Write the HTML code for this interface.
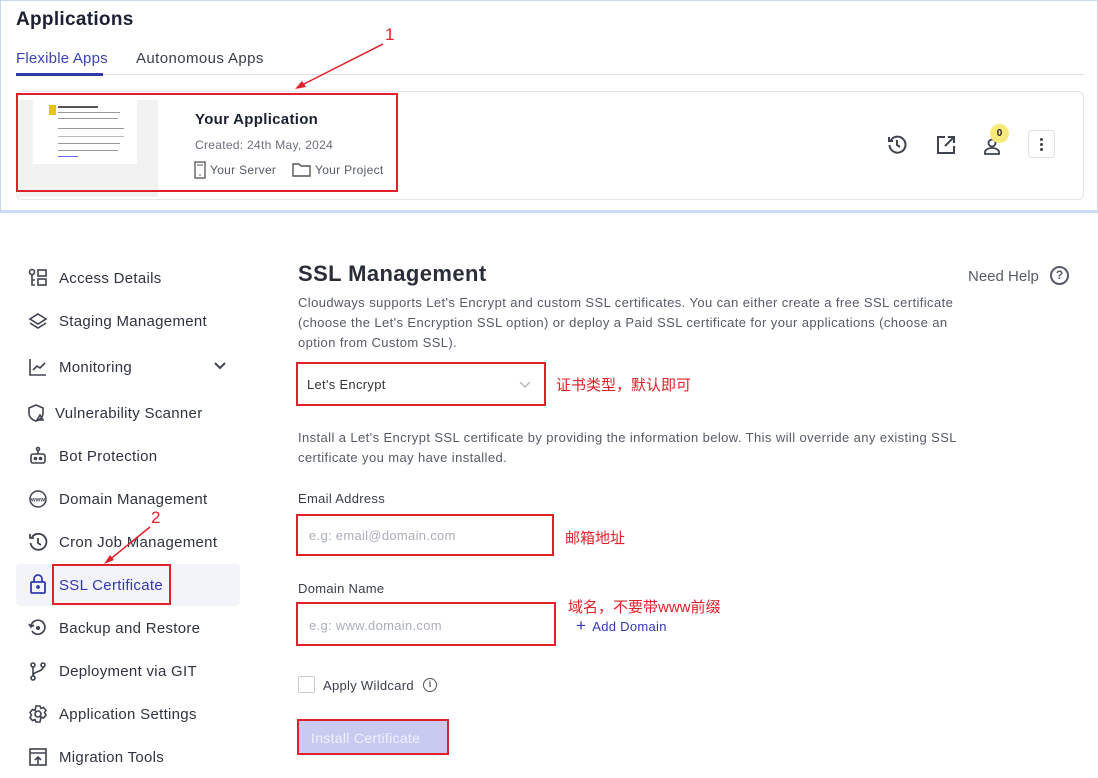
<!DOCTYPE html>
<html><head><meta charset="utf-8"><style>
*{margin:0;padding:0;box-sizing:border-box}
body{width:1098px;height:778px;position:relative;background:#fff;font-family:"Liberation Sans","Noto Sans CJK SC",sans-serif;color:#2b2f3b;overflow:hidden}
.a{position:absolute;white-space:nowrap}
.red{border:2px solid #e0202a}
.cn{color:#e0202a;font-size:15px;font-family:"Liberation Sans","Noto Sans CJK SC",sans-serif}
.nav{position:absolute;left:59px;font-size:15px;color:#2f3340;line-height:18px;letter-spacing:0.3px}
.ic{position:absolute;left:28px}
svg{display:block}
.p{font-size:13px;color:#555a66;line-height:20px;letter-spacing:0.4px}
</style></head><body>
<div class="a" style="left:0;top:0;width:1098px;height:213px;border:1px solid #c8d8ee;border-bottom:3px solid #c7dcf3;background:#fff"></div>
<div class="a" style="left:16px;top:9px;font-size:19px;font-weight:bold;color:#1b2033;letter-spacing:0.3px">Applications</div>
<div class="a" style="left:16px;top:50px;font-size:15px;color:#3a44b8;letter-spacing:0.2px">Flexible Apps</div>
<div class="a" style="left:136px;top:50px;font-size:15px;color:#3a3e4a;letter-spacing:0.4px">Autonomous Apps</div>
<div class="a" style="left:16px;top:74px;width:1068px;height:1px;background:#dcdfe5"></div>
<div class="a" style="left:16px;top:73px;width:87px;height:3px;background:#2d3aa8"></div>
<div class="a" style="left:16px;top:91px;width:1068px;height:109px;border:1px solid #e3e5ea;border-radius:6px;background:#fff"></div>
<div class="a" style="left:18px;top:100px;width:140px;height:97px;background:#f2f2f2"></div>
<div class="a" style="left:33px;top:100px;width:104px;height:64px;background:#fff"></div>
<div class="a" style="left:49px;top:105px;width:7px;height:10px;background:#e7c21a"></div>
<div class="a" style="left:58px;top:106px;width:40px;height:2px;background:#555"></div>
<div class="a" style="left:58px;top:112px;width:62px;height:1px;background:#999"></div>
<div class="a" style="left:58px;top:118px;width:60px;height:1px;background:#999"></div>
<div class="a" style="left:58px;top:128px;width:66px;height:1px;background:#999"></div>
<div class="a" style="left:58px;top:136px;width:66px;height:1px;background:#bbb"></div>
<div class="a" style="left:58px;top:143px;width:62px;height:1px;background:#999"></div>
<div class="a" style="left:58px;top:150px;width:60px;height:1px;background:#999"></div>
<div class="a" style="left:58px;top:156px;width:20px;height:1px;background:#66f"></div>
<div class="a red" style="left:16px;top:93px;width:382px;height:99px"></div>
<div class="a" style="left:195px;top:111px;font-size:15px;font-weight:bold;color:#1b2033;letter-spacing:0.3px">Your Application</div>
<div class="a" style="left:195px;top:138px;font-size:12px;color:#6b6f7a;letter-spacing:0.3px">Created: 24th May, 2024</div>
<svg class="a" style="left:194px;top:161px" width="12" height="18"><rect x="1" y="1" width="10" height="16" fill="none" stroke="#555" stroke-width="1.3"/><line x1="3" y1="4" x2="9" y2="4" stroke="#555"/><circle cx="6" cy="14" r=".8" fill="#555"/></svg>
<div class="a" style="left:210px;top:163px;font-size:12px;color:#555a66;letter-spacing:0.3px">Your Server</div>
<svg class="a" style="left:292px;top:162px" width="19" height="15"><path d="M1 2h6l2 2h9v10H1z" fill="none" stroke="#555" stroke-width="1.4"/></svg>
<div class="a" style="left:315px;top:163px;font-size:12px;color:#555a66;letter-spacing:0.3px">Your Project</div>
<svg class="a" style="left:887px;top:134px" width="20" height="20" fill="none" stroke="#3f4350" stroke-width="2"><path d="M4 6A8 8 0 1 1 2.5 11"/><path d="M2 3v4h4"/><path d="M10 6v5l3 2"/></svg>
<svg class="a" style="left:936px;top:135px" width="20" height="20" fill="none" stroke="#3f4350" stroke-width="2"><path d="M9 2H2v16h16v-7"/><path d="M12 2h6v6M18 2l-9 9"/></svg>
<svg class="a" style="left:983px;top:136px" width="18" height="20" fill="none" stroke="#3f4350" stroke-width="1.8"><circle cx="9" cy="7" r="3.5"/><path d="M2 18v-2c0-2 3-4 7-4s7 2 7 4v2z"/></svg>
<div class="a" style="left:990px;top:124px;width:19px;height:19px;border-radius:50%;background:#f8ea7a;font-size:10px;font-weight:bold;text-align:center;line-height:19px;color:#222">0</div>
<div class="a" style="left:1028px;top:130px;width:27px;height:28px;border:1px solid #dde0e6;border-radius:4px"></div>
<div class="a" style="left:1040px;top:138px;width:3px;height:3px;border-radius:50%;background:#3f4350;box-shadow:0 5px 0 #3f4350,0 10px 0 #3f4350"></div>
<div class="a" style="left:385px;top:25px;font-size:17px;color:#e0202a">1</div>
<svg class="a" style="left:290px;top:40px" width="100" height="55"><line x1="93" y1="4" x2="8" y2="47" stroke="#e0202a" stroke-width="1.5"/><path d="M5 49l11-2-4-6z" fill="#e0202a"/></svg>

<div class="a" style="left:16px;top:564px;width:224px;height:42px;background:#f3f4fa;border-radius:4px"></div>
<svg class="ic" style="top:268px" width="20" height="20" fill="none" stroke="#3f4350" stroke-width="1.6"><circle cx="4" cy="4" r="2.5"/><path d="M4 7v10h3M4 12h3"/><rect x="10" y="2" width="8" height="6"/><rect x="10" y="11" width="8" height="6"/></svg>
<div class="nav" style="top:270px">Access Details</div>
<svg class="ic" style="top:312px" width="20" height="20" fill="none" stroke="#3f4350" stroke-width="1.6"><path d="M10 2l8 5-8 5-8-5z"/><path d="M2 11l8 5 8-5"/></svg>
<div class="nav" style="top:313px">Staging Management</div>
<svg class="ic" style="top:357px" width="20" height="20" fill="none" stroke="#3f4350" stroke-width="1.6"><path d="M2 2v16h16"/><path d="M5 13l4-4 3 2 5-5"/></svg>
<div class="nav" style="top:359px">Monitoring</div>
<svg class="a" style="left:214px;top:362px" width="12" height="8" fill="none" stroke="#3f4350" stroke-width="2"><path d="M1 1l5 5 5-5"/></svg>
<svg class="ic" style="top:403px;left:26px" width="20" height="20" fill="none" stroke="#3f4350" stroke-width="1.6"><path d="M10 2l7 3v5c0 4-3 7-7 8-4-1-7-4-7-8V5z"/><path d="M11 17l3-5 3 5z"/></svg>
<div class="nav" style="top:405px;left:55px">Vulnerability Scanner</div>
<svg class="ic" style="top:446px" width="20" height="20" fill="none" stroke="#3f4350" stroke-width="1.6"><circle cx="10" cy="3" r="1.5"/><path d="M10 5v3"/><rect x="3" y="8" width="14" height="9" rx="2"/><circle cx="7.5" cy="12.5" r="1" fill="#3f4350"/><circle cx="12.5" cy="12.5" r="1" fill="#3f4350"/></svg>
<div class="nav" style="top:448px">Bot Protection</div>
<svg class="ic" style="top:489px" width="20" height="20" fill="none" stroke="#3f4350" stroke-width="1.5"><circle cx="10" cy="10" r="8"/><text x="10" y="12.5" font-size="6" text-anchor="middle" fill="#3f4350" stroke="none" font-weight="bold" font-family="Liberation Sans">www</text></svg>
<div class="nav" style="top:491px">Domain Management</div>
<svg class="ic" style="top:532px" width="20" height="20" fill="none" stroke="#3f4350" stroke-width="1.8"><path d="M4 5A8 8 0 1 1 2.5 11"/><path d="M2 2v4h4"/><path d="M10 6v5l3 2"/></svg>
<div class="nav" style="top:534px">Cron Job Management</div>
<svg class="ic" style="top:574px" width="20" height="20" fill="none" stroke="#3338b0" stroke-width="1.8"><rect x="3" y="8" width="14" height="11" rx="1"/><path d="M6 8V5a4 4 0 0 1 8 0v3"/><circle cx="10" cy="13" r="1" fill="#3338b0"/></svg>
<div class="nav" style="top:577px;color:#3338b0">SSL Certificate</div>
<div class="a red" style="left:52px;top:564px;width:119px;height:41px"></div>
<div class="a" style="left:151px;top:508px;font-size:17px;color:#e0202a">2</div>
<svg class="a" style="left:100px;top:524px" width="55" height="45"><line x1="50" y1="3" x2="8" y2="37" stroke="#e0202a" stroke-width="1.5"/><path d="M4 40l10-4-4-5z" fill="#e0202a"/></svg>
<svg class="ic" style="top:618px" width="20" height="20" fill="none" stroke="#3f4350" stroke-width="1.7"><path d="M4 13A7 7 0 1 0 3 8"/><path d="M1 6l2 3 3-2"/><circle cx="10" cy="10" r="1.2" fill="#3f4350"/></svg>
<div class="nav" style="top:620px">Backup and Restore</div>
<svg class="ic" style="top:661px" width="20" height="20" fill="none" stroke="#3f4350" stroke-width="1.6"><circle cx="5" cy="4" r="2"/><circle cx="5" cy="17" r="2"/><circle cx="15" cy="4" r="2"/><path d="M5 6v9M15 6c0 5-10 4-10 9"/></svg>
<div class="nav" style="top:663px">Deployment via GIT</div>
<svg class="ic" style="top:704px" width="20" height="20" fill="none" stroke="#3f4350" stroke-width="1.6"><circle cx="10" cy="10" r="3"/><path d="M8 2h4l1 2.5 2.5-1 2.5 3-1.5 2 1.5 2.5-2.5 3-2.5-1L12 18H8l-1-2.5-2.5 1-2.5-3L3.5 11 2 8.5l2.5-3 2.5 1z"/></svg>
<div class="nav" style="top:706px">Application Settings</div>
<svg class="ic" style="top:747px" width="20" height="20" fill="none" stroke="#3f4350" stroke-width="1.6"><rect x="2" y="2" width="16" height="16"/><path d="M2 6h16M10 17v-7M7 13l3-3 3 3"/></svg>
<div class="nav" style="top:749px">Migration Tools</div>

<div class="a" style="left:298px;top:261px;font-size:22px;font-weight:bold;color:#2a2e3a;letter-spacing:0.4px">SSL Management</div>
<div class="a" style="left:968px;top:268px;font-size:15px;color:#555a66">Need Help</div>
<div class="a" style="left:1050px;top:266px;width:19px;height:19px;border:2px solid #555a66;border-radius:50%;font-size:12px;font-weight:bold;text-align:center;line-height:15px;color:#555a66">?</div>
<div class="a p" style="left:298px;top:293px">Cloudways supports Let's Encrypt and custom SSL certificates. You can either create a free SSL certificate<br>(choose the Let's Encryption SSL option) or deploy a Paid SSL certificate for your applications (choose an<br>option from Custom SSL).</div>
<div class="a red" style="left:296px;top:362px;width:250px;height:44px"></div>
<div class="a" style="left:307px;top:377px;font-size:13px;color:#333;letter-spacing:0.3px">Let's Encrypt</div>
<svg class="a" style="left:519px;top:381px" width="12" height="7" fill="none" stroke="#bbb" stroke-width="1.5"><path d="M1 1l5 5 5-5"/></svg>
<div class="a cn" style="left:556px;top:374px">证书类型，默认即可</div>
<div class="a p" style="left:298px;top:428px">Install a Let's Encrypt SSL certificate by providing the information below. This will override any existing SSL<br>certificate you may have installed.</div>
<div class="a" style="left:298px;top:491px;font-size:13px;color:#3a3e4a;letter-spacing:0.3px">Email Address</div>
<div class="a red" style="left:296px;top:514px;width:258px;height:42px"></div>
<div class="a" style="left:309px;top:528px;font-size:13px;color:#aaaeb8;letter-spacing:0.3px">e.g: email@domain.com</div>
<div class="a cn" style="left:565px;top:527px">邮箱地址</div>
<div class="a" style="left:298px;top:581px;font-size:13px;color:#3a3e4a;letter-spacing:0.3px">Domain Name</div>
<div class="a red" style="left:296px;top:602px;width:260px;height:44px"></div>
<div class="a" style="left:309px;top:618px;font-size:13px;color:#aaaeb8;letter-spacing:0.3px">e.g: www.domain.com</div>
<div class="a cn" style="left:568px;top:596px">域名，不要带www前缀</div>
<div class="a" style="left:576px;top:616px;font-size:13px;color:#3338b0;letter-spacing:0.3px"><span style="font-size:17px;margin-right:6px">+</span>Add Domain</div>
<div class="a" style="left:298px;top:676px;width:17px;height:17px;border:1px solid #c9ccd3;border-radius:2px"></div>
<div class="a" style="left:323px;top:678px;font-size:13px;color:#3a3e4a;letter-spacing:0.3px">Apply Wildcard</div>
<div class="a" style="left:423px;top:678px;width:14px;height:14px;border:1.5px solid #555;border-radius:50%;font-size:9px;font-weight:bold;text-align:center;line-height:11px;color:#555">i</div>
<div class="a" style="left:297px;top:719px;width:152px;height:36px;background:#c8cbef;border:2px solid #e0202a"></div>
<div class="a" style="left:311px;top:730px;font-size:14px;color:#eef0ff;letter-spacing:0.3px">Install Certificate</div>
</body></html>
